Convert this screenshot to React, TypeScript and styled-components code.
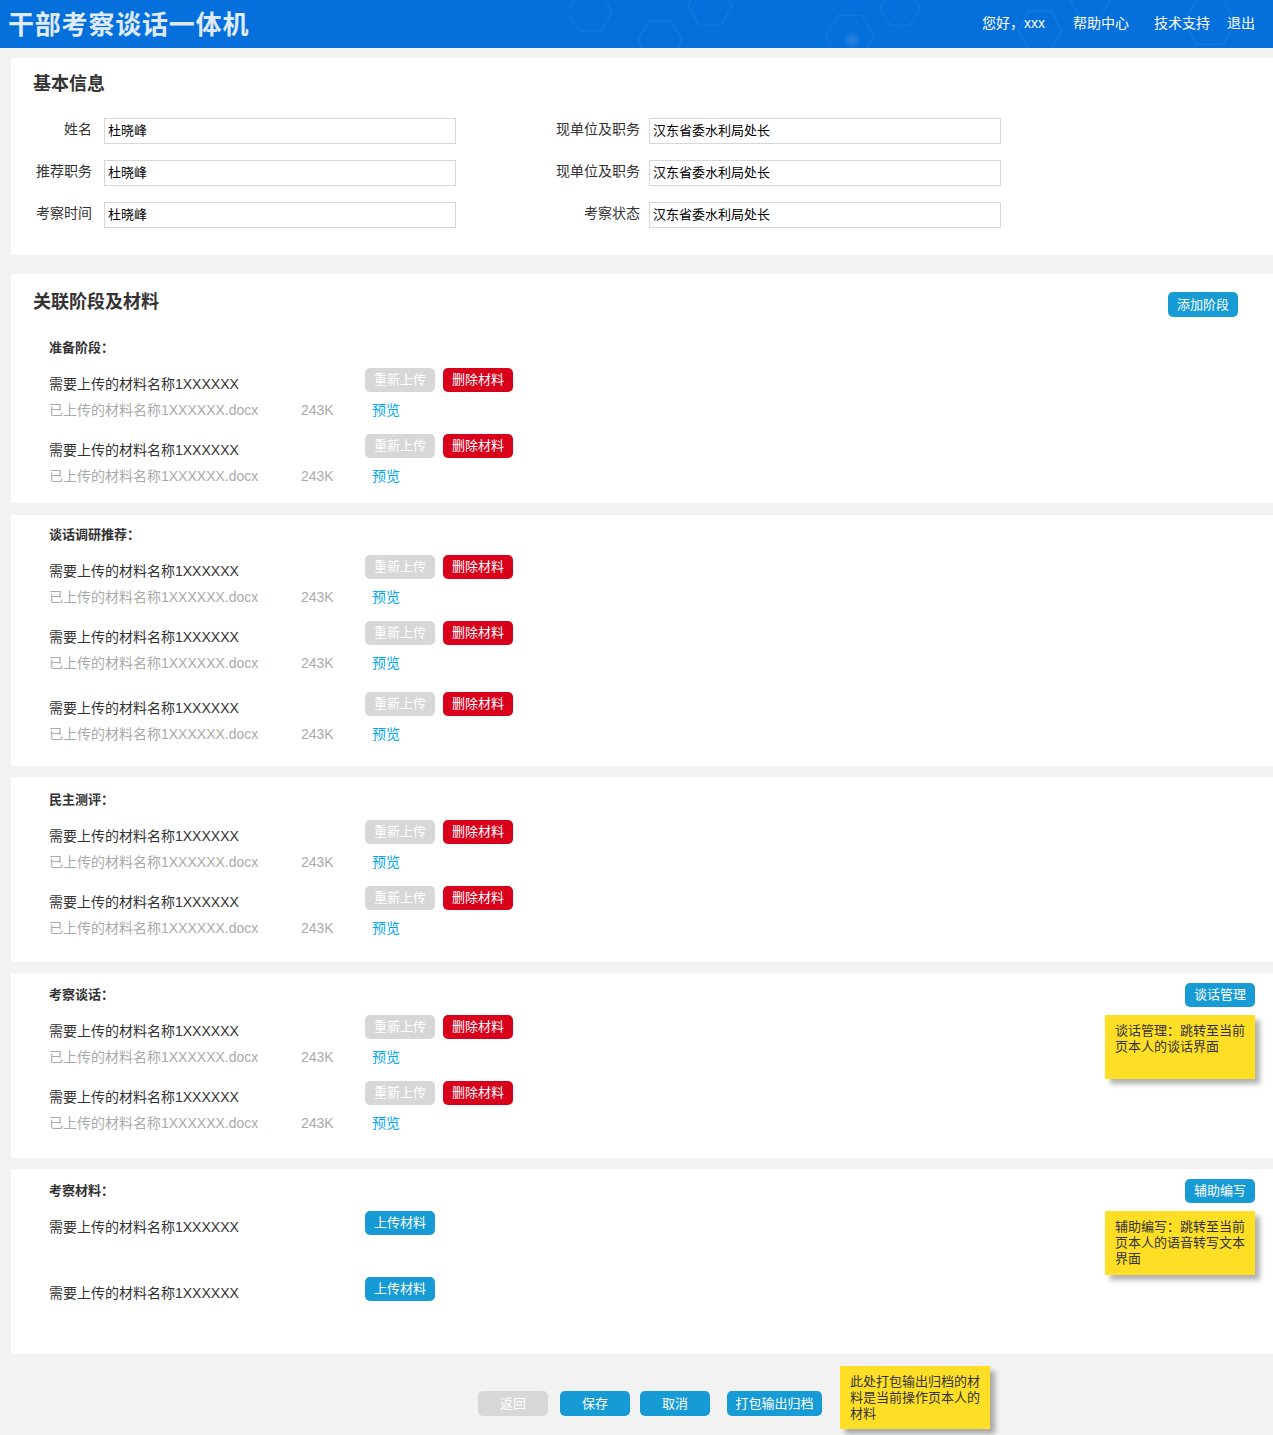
import type { ReactElement } from "react";
import styled, { createGlobalStyle } from "styled-components";

const FONT = `"Liberation Sans", "Noto Sans CJK SC", sans-serif`;

const GlobalStyle = createGlobalStyle`
  body {
    margin: 0;
    background: #f2f2f2;
    font-family: ${FONT};
    color: #333333;
  }
`;

type Material = { uploaded: boolean; offset?: number };

type Stage = {
  title: string;
  items: Material[];
  action?: string;
  note?: string;
  pt: number;
  pb: number;
};

const done: Material = { uploaded: true };
const todo: Material = { uploaded: false };

const STAGES: Stage[] = [
  { title: "谈话调研推荐：", items: [done, done, { uploaded: true, offset: 5 }], pt: 10, pb: 23 },
  { title: "民主测评：", items: [done, done], pt: 13, pb: 25 },
  {
    title: "考察谈话：",
    items: [done, done],
    action: "谈话管理",
    note: "谈话管理：跳转至当前页本人的谈话界面",
    pt: 12,
    pb: 26,
  },
  {
    title: "考察材料：",
    items: [todo, todo],
    action: "辅助编写",
    note: "辅助编写：跳转至当前页本人的语音转写文本界面",
    pt: 12,
    pb: 26,
  },
];

const FIELDS = [
  ["姓名", "杜晓峰", "现单位及职务", "汉东省委水利局处长"],
  ["推荐职务", "杜晓峰", "现单位及职务", "汉东省委水利局处长"],
  ["考察时间", "杜晓峰", "考察状态", "汉东省委水利局处长"],
];

function HeaderPattern(): ReactElement {
  const hex = (cx: number, cy: number, r: number) => {
    const pts = [0, 1, 2, 3, 4, 5]
      .map((i) => {
        const a = (Math.PI / 3) * i;
        return `${cx + r * Math.cos(a)},${cy + r * Math.sin(a)}`;
      })
      .join(" ");
    return <polygon key={`${cx}-${cy}`} points={pts} />;
  };
  return (
    <PatternSvg width="700" height="48" viewBox="0 0 700 48">
      <g fill="none" stroke="rgba(255,255,255,0.06)" strokeWidth="1.5">
        {hex(20, 12, 22)}
        {hex(90, 40, 22)}
        {hex(140, 6, 22)}
        {hex(280, 36, 24)}
        {hex(330, 8, 20)}
        {hex(470, 30, 22)}
        {hex(520, 0, 20)}
        {hex(640, 22, 26)}
      </g>
      <circle cx="282" cy="40" r="8" fill="rgba(255,255,255,0.06)" />
      <circle cx="282" cy="40" r="4" fill="rgba(255,255,255,0.07)" />
    </PatternSvg>
  );
}

function MaterialItem({ item }: { item: Material }): ReactElement {
  return (
    <Item $offset={item.offset ?? 0}>
      <ItemTop>
        <ItemName>需要上传的材料名称1XXXXXX</ItemName>
        {item.uploaded ? (
          <Actions>
            <Button $tone="gray">重新上传</Button>
            <Button $tone="red">删除材料</Button>
          </Actions>
        ) : (
          <Actions>
            <Button $tone="blue">上传材料</Button>
          </Actions>
        )}
      </ItemTop>
      <FileRow>
        {item.uploaded && (
          <>
            <FileName>已上传的材料名称1XXXXXX.docx</FileName>
            <FileSize>243K</FileSize>
            <Preview>预览</Preview>
          </>
        )}
      </FileRow>
    </Item>
  );
}

function StageBlock({ stage }: { stage: Stage }): ReactElement {
  return (
    <StageWrap>
      <StageHead>
        <StageTitle>{stage.title}</StageTitle>
        {stage.action && <Button $tone="blue">{stage.action}</Button>}
      </StageHead>
      <ItemList>
        {stage.items.map((item, i) => (
          <MaterialItem key={i} item={item} />
        ))}
      </ItemList>
    </StageWrap>
  );
}

export default function App(): ReactElement {
  return (
    <>
      <GlobalStyle />
      <Header>
        <HeaderPattern />
        <AppTitle>干部考察谈话一体机</AppTitle>
        <Nav>
          <NavLink $gap={0}>您好，xxx</NavLink>
          <NavLink $gap={28}>帮助中心</NavLink>
          <NavLink $gap={25}>技术支持</NavLink>
          <NavLink $gap={17}>退出</NavLink>
        </Nav>
      </Header>
      <Main>
        <Card $pt={14} $pb={27} $mt={0}>
          <CardTitle>基本信息</CardTitle>
          <InfoGrid>
            {FIELDS.map(([l1, v1, l2, v2]) => (
              <InfoRow key={l1}>
                <FieldLabel $w={93} $pr={12}>
                  {l1}
                </FieldLabel>
                <FieldInput>{v1}</FieldInput>
                <FieldLabel $w={193} $pr={9}>
                  {l2}
                </FieldLabel>
                <FieldInput>{v2}</FieldInput>
              </InfoRow>
            ))}
          </InfoGrid>
        </Card>

        <Card $pt={16} $pb={18} $mt={19}>
          <TitleRow>
            <CardTitle>关联阶段及材料</CardTitle>
            <AddButton $tone="blue">添加阶段</AddButton>
          </TitleRow>
          <FirstStage>
            <StageBlock stage={{ title: "准备阶段：", items: [done, done], pt: 0, pb: 0 }} />
          </FirstStage>
        </Card>

        {STAGES.map((stage) => (
          <Card key={stage.title} $pt={stage.pt} $pb={stage.pb} $mt={stage.title === "谈话调研推荐：" ? 12 : 11}>
            <StageBlock stage={stage} />
            {stage.note && <Note $top={42}>{stage.note}</Note>}
          </Card>
        ))}

        <Footer>
          <FooterButton $tone="gray" $ml={0} $w={70}>
            返回
          </FooterButton>
          <FooterButton $tone="blue" $ml={12} $w={70}>
            保存
          </FooterButton>
          <FooterButton $tone="blue" $ml={10} $w={70}>
            取消
          </FooterButton>
          <FooterButton $tone="blue" $ml={17} $w={95}>
            打包输出归档
          </FooterButton>
          <FooterNote>此处打包输出归档的材料是当前操作页本人的材料</FooterNote>
        </Footer>
      </Main>
    </>
  );
}

const Header = styled.header`
  position: relative;
  height: 48px;
  background: #056fdc;
  display: flex;
  align-items: center;
  justify-content: space-between;
  overflow: hidden;
`;

const PatternSvg = styled.svg`
  position: absolute;
  left: 570px;
  top: 0;
`;

const AppTitle = styled.h1`
  position: relative;
  margin: 3px 0 0 8px;
  font-size: 26px;
  line-height: 45px;
  font-weight: 700;
  letter-spacing: 0.8px;
  color: #dfeafa;
`;

const Nav = styled.nav`
  position: relative;
  display: flex;
  align-items: center;
  padding-right: 18px;
  margin-top: -2px;
`;

const NavLink = styled.span<{ $gap: number }>`
  margin-left: ${(p) => p.$gap}px;
  font-size: 14px;
  line-height: 20px;
  color: #ffffff;
  cursor: pointer;
`;

const Main = styled.main`
  padding: 10px 0 0 11px;
`;

const Card = styled.section<{ $pt: number; $pb: number; $mt: number }>`
  position: relative;
  background: #ffffff;
  margin-top: ${(p) => p.$mt}px;
  padding: ${(p) => p.$pt}px 18px ${(p) => p.$pb}px 22px;
`;

const CardTitle = styled.h2`
  margin: 0;
  font-size: 18px;
  line-height: 24px;
  font-weight: 700;
  color: #333333;
`;

const TitleRow = styled.div`
  display: flex;
  justify-content: space-between;
  align-items: flex-start;
`;

const InfoGrid = styled.div`
  margin: 22px 0 0 -22px;
  display: flex;
  flex-direction: column;
  gap: 16px;
`;

const InfoRow = styled.div`
  display: flex;
  align-items: center;
  height: 26px;
`;

const FieldLabel = styled.label<{ $w: number; $pr: number }>`
  width: ${(p) => p.$w}px;
  padding-right: ${(p) => p.$pr}px;
  box-sizing: border-box;
  text-align: right;
  font-size: 14px;
  line-height: 20px;
  color: #333333;
  margin-top: -4px;
`;

const FieldInput = styled.div`
  width: 352px;
  height: 26px;
  box-sizing: border-box;
  border: 1px solid #d7d7d7;
  padding-left: 3px;
  font-size: 13px;
  line-height: 24px;
  color: #000000;
  background: #ffffff;
`;

const FirstStage = styled.div`
  margin-top: 21px;
`;

const StageWrap = styled.div`
  padding-left: 16px;
`;

const StageHead = styled.div`
  display: flex;
  justify-content: space-between;
  align-items: center;
  height: 20px;
`;

const StageTitle = styled.h3`
  margin: 0;
  font-size: 13px;
  line-height: 20px;
  font-weight: 700;
  color: #333333;
`;

const ItemList = styled.div`
  margin-top: 10px;
  display: flex;
  flex-direction: column;
  gap: 15px;
`;

const Item = styled.div<{ $offset: number }>`
  margin-top: ${(p) => p.$offset}px;
`;

const ItemTop = styled.div`
  display: flex;
  align-items: flex-start;
`;

const ItemName = styled.div`
  width: 316px;
  margin-top: 7px;
  font-size: 14px;
  line-height: 18px;
  color: #333333;
`;

const Actions = styled.div`
  display: flex;
  gap: 8px;
`;

const TONES = {
  gray: "#d7d7d7",
  red: "#d9001b",
  blue: "#169bd5",
};

const Button = styled.button<{ $tone: keyof typeof TONES }>`
  width: 70px;
  height: 24px;
  padding: 0;
  border: none;
  border-radius: 5px;
  background: ${(p) => TONES[p.$tone]};
  color: #ffffff;
  font-family: ${FONT};
  font-size: 13px;
  line-height: 24px;
  cursor: pointer;
`;

const AddButton = styled(Button)`
  height: 25px;
  margin: 2px 17px 0 0;
`;

const FileRow = styled.div`
  display: flex;
  margin-top: 8px;
  height: 18px;
  font-size: 14px;
  line-height: 18px;
`;

const FileName = styled.span`
  width: 252px;
  color: #aaaaaa;
`;

const FileSize = styled.span`
  width: 71px;
  color: #aaaaaa;
`;

const Preview = styled.a`
  color: #02a7f0;
  cursor: pointer;
`;

const Note = styled.div<{ $top: number }>`
  position: absolute;
  top: ${(p) => p.$top}px;
  right: 18px;
  width: 150px;
  height: 64px;
  box-sizing: border-box;
  padding: 8px 9px 0 10px;
  background: #ffdf25;
  box-shadow: 5px 5px 5px rgba(0, 0, 0, 0.3);
  font-size: 13px;
  line-height: 16px;
  color: #333333;
`;

const Footer = styled.footer`
  display: flex;
  align-items: flex-start;
  padding: 12px 0 6px 467px;
`;

const FooterButton = styled(Button)<{ $ml: number; $w: number }>`
  width: ${(p) => p.$w}px;
  height: 25px;
  line-height: 25px;
  margin: 25px 0 0 ${(p) => p.$ml}px;
`;

const FooterNote = styled.div`
  margin-left: 18px;
  width: 150px;
  height: 63px;
  box-sizing: border-box;
  padding: 8px 9px 0 10px;
  background: #ffdf25;
  box-shadow: 5px 5px 5px rgba(0, 0, 0, 0.3);
  font-size: 13px;
  line-height: 16px;
  color: #333333;
`;
